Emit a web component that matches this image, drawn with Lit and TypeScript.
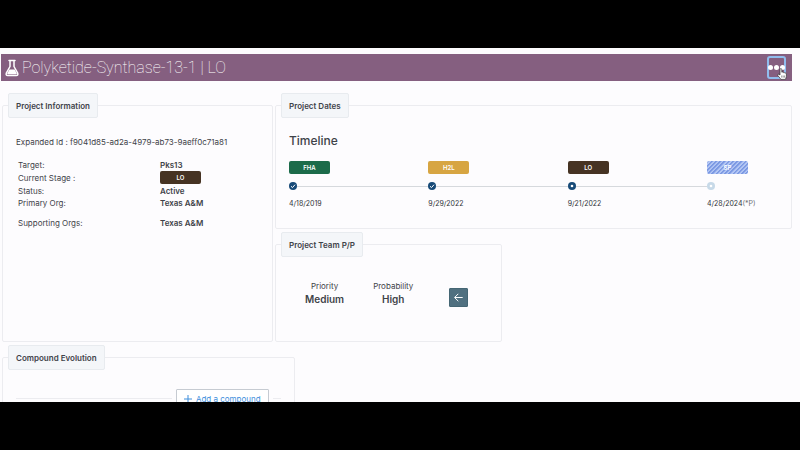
import { LitElement, html, css } from "lit";
import { customElement } from "lit/decorators.js";
import { classMap } from "lit/directives/class-map.js";

interface Stage {
  name: string;
  tone: string;
  date: string;
  note?: string;
  state: "done" | "current" | "planned";
}

const STAGES: Stage[] = [
  { name: "FHA", tone: "fha", date: "4/18/2019", state: "done" },
  { name: "H2L", tone: "h2l", date: "9/29/2022", state: "done" },
  { name: "LO", tone: "lo", date: "9/21/2022", state: "current" },
  { name: "SP", tone: "sp", date: "4/28/2024", note: "(*P)", state: "planned" },
];

const tagStyles = css`
  .tag {
    display: flex;
    align-items: center;
    justify-content: center;
    box-sizing: border-box;
    width: 41px;
    height: 13px;
    border-radius: 2px;
    color: #fff;
    font-size: 6px;
    font-weight: 600;
  }
  .fha { background: #1c6b4a; }
  .h2l { background: #d7a542; }
  .lo { background: #463323; }
  .sp {
    color: #fff;
    background: repeating-linear-gradient(135deg, #7c99e3 0 1px, #b3c6f4 2px 3px);
  }
`;

@customElement("project-timeline")
export class ProjectTimeline extends LitElement {
  static styles = [
    tagStyles,
    css`
      :host { display: block; }
      .steps {
        display: flex;
        margin: 0;
        padding: 0;
        list-style: none;
      }
      .step { flex: 1; }
      .step:last-child { flex: none; width: 71px; }
      .rail {
        display: flex;
        align-items: center;
        height: 8px;
        margin: 8px 0;
      }
      .marker { flex: none; width: 8px; height: 8px; color: #174a78; }
      .planned .marker { color: #c7d9e8; }
      .line { flex: 1; height: 1px; background: #d6d9dd; }
      .date { font-size: 7px; line-height: 12px; color: #2f3338; white-space: nowrap; }
      .note { color: #6b7076; }
    `,
  ];

  render() {
    return html`<ol class="steps">
      ${STAGES.map(
        (s, i) => html`<li class=${classMap({ step: true, [s.state]: true })}>
          <span class="tag ${s.tone}">${s.name}</span>
          <div class="rail">
            <svg class="marker" viewBox="0 0 16 16" aria-hidden="true">
              <circle cx="8" cy="8" r="8" fill="currentColor" />
              ${s.state === "done"
                ? html`<svg viewBox="0 0 16 16"><path d="M4 8.500 7 11.200 12 5.400" fill="none" stroke="#fff" stroke-width="2" /></svg>`
                : html`<svg viewBox="0 0 16 16"><circle cx="8" cy="8" r="2.600" fill="#fff" /></svg>`}
            </svg>
            ${i < STAGES.length - 1 ? html`<span class="line"></span>` : ""}
          </div>
          <div class="date">${s.date}<span class="note">${s.note ?? ""}</span></div>
        </li>`
      )}
    </ol>`;
  }
}

@customElement("app-root")
export class AppRoot extends LitElement {
  static styles = [
    tagStyles,
    css`
      :host {
        display: grid;
        grid-template-rows: 48px minmax(0, 1fr) 48px;
        height: 100vh;
        background: #000;
        color: #3f4349;
        font-family: Inter, "Liberation Sans", sans-serif;
        font-size: 8px;
      }
      .page {
        grid-row: 2;
        overflow: hidden;
        padding: 6px 8px 0 1px;
        background: #fdfcfe;
      }
      .bar {
        display: flex;
        align-items: center;
        gap: 3px;
        height: 27px;
        padding: 0 6px 0 4px;
        background: #855f80;
        color: #fff;
      }
      .flask { flex: none; width: 14px; height: 18px; }
      h1 {
        flex: 1;
        margin: 0;
        font-family: Roboto, "Liberation Sans", sans-serif;
        font-size: 16px;
        line-height: 20px;
        font-weight: 100;
        white-space: nowrap;
      }
      .more {
        position: relative;
        display: flex;
        align-items: center;
        justify-content: center;
        box-sizing: border-box;
        width: 19px;
        height: 23px;
        padding: 0;
        border: 2px solid #90bdee;
        border-radius: 3px;
        background: transparent;
        color: #fff;
      }
      .dots { flex: none; width: 17px; height: 5px; }
      .cursor { position: absolute; left: 8px; top: 10px; width: 10px; height: 12px; }
      .grid {
        display: grid;
        grid-template-columns: 271fr 517fr;
        gap: 4px 2px;
        padding: 12px 0 0 1px;
      }
      .right { display: grid; gap: 3px; }
      fieldset {
        box-sizing: border-box;
        min-width: 0;
        margin: 0;
        padding: 0 13px;
        border: 1px solid #ececf0;
        border-radius: 2px;
      }
      legend {
        box-sizing: border-box;
        height: 25px;
        margin-left: -8px;
        padding: 0 7px;
        border: 1px solid #e8ebef;
        border-radius: 2px;
        background: #f4f6f9;
        font-size: 8px;
        line-height: 24px;
        font-weight: 600;
      }
      .id { margin: 18px 0 11px; line-height: 12px; white-space: nowrap; }
      .facts { border-collapse: collapse; margin-left: 2px; line-height: 12px; }
      .facts th { width: 142px; padding: 0; text-align: left; font-weight: 400; }
      .facts td { padding: 0; font-weight: 600; }
      .facts .stage > * { padding-bottom: 1px; }
      .facts .tall > * { padding-top: 8px; }
      .dates { height: 136px; }
      h2 { margin: 14px 0 11px; font-size: 12px; line-height: 18px; font-weight: 500; }
      .team { width: 44%; height: 110px; }
      .scores {
        display: flex;
        align-items: center;
        padding: 23px 20px 0 16px;
      }
      dl {
        display: flex;
        flex: 1;
        gap: 29px;
        margin: 0;
        text-align: center;
      }
      dt { line-height: 12px; }
      dd { margin: 0; font-size: 10px; line-height: 15px; font-weight: 600; }
      .back {
        display: flex;
        align-items: center;
        justify-content: center;
        align-self: flex-end;
        width: 19px;
        height: 19px;
        padding: 0;
        border: 1px solid #456674;
        border-radius: 1px;
        background: #507080;
        color: #fff;
      }
      .back svg { flex: none; width: 9px; height: 9px; }
      .compounds { width: 37%; margin: 3px 0 0 1px; }
      .divider { display: flex; align-items: center; gap: 4px; padding-top: 19px; }
      .rule { flex: 1; height: 1px; background: #ececf0; }
      .rule.end { flex: none; width: 8px; }
      .add {
        display: flex;
        align-items: center;
        gap: 4px;
        height: 19px;
        padding: 0 7px;
        border: 1px solid #c6cbd2;
        border-radius: 1px;
        background: #fff;
        color: #3f8fdc;
        font: 400 8px/12px Inter, "Liberation Sans", sans-serif;
        white-space: nowrap;
      }
      .add svg { flex: none; width: 8px; height: 8px; }
    `,
  ];

  render() {
    return html`<main class="page">
      <header class="bar">
        <svg class="flask" viewBox="0 0 14 18" aria-hidden="true">
          <path d="M4 1.500H10M5 2V7.500L1.300 14.200Q.6 16.500 2.700 16.500H11.300Q13.400 16.500 12.700 14.200L9 7.500V2" fill="none" stroke="#fff" stroke-width="1.500" stroke-linecap="round" stroke-linejoin="round" />
          <path d="M4.400 10.500H9.600L11.700 14.300Q12 15.300 11 15.300H3Q2 15.300 2.300 14.300Z" fill="#fff" />
        </svg>
        <h1>Polyketide-Synthase-13-1 | LO</h1>
        <button class="more" aria-label="More actions">
          <svg class="dots" viewBox="0 0 17 5"><g fill="#fff"><circle cx="2.500" cy="2.500" r="2.500" /><circle cx="8.500" cy="2.500" r="2.500" /><circle cx="14.500" cy="2.500" r="2.500" /></g></svg>
          <svg class="cursor" viewBox="0 0 10 12"><path d="M3 7V1.600Q3 .6 3.900.6T4.800 1.600V4.200Q5.700 3.600 6.300 4.500Q7.200 4 7.800 4.900Q9.400 4.700 9.400 6V8.500L8.500 11.400H4L.8 7.500Q.5 6.200 1.700 6.200Z" fill="#fff" stroke="#333" stroke-width=".7" stroke-linejoin="round" /><path d="M4.700 7.500V9.600M6.200 7.500V9.600M7.600 7.500V9.600" stroke="#555" stroke-width=".6" /></svg>
        </button>
      </header>

      <div class="grid">
        <fieldset>
          <legend>Project Information</legend>
          <p class="id">Expanded Id : f9041d85-ad2a-4979-ab73-9aeff0c71a81</p>
          <table class="facts">
            <tr><th scope="row">Target:</th><td>Pks13</td></tr>
            <tr class="stage"><th scope="row">Current Stage :</th><td><span class="tag lo">LO</span></td></tr>
            <tr><th scope="row">Status:</th><td>Active</td></tr>
            <tr><th scope="row">Primary Org:</th><td>Texas A&amp;M</td></tr>
            <tr class="tall"><th scope="row">Supporting Orgs:</th><td>Texas A&amp;M</td></tr>
          </table>
        </fieldset>

        <div class="right">
          <fieldset class="dates">
            <legend>Project Dates</legend>
            <h2>Timeline</h2>
            <project-timeline></project-timeline>
          </fieldset>
          <fieldset class="team">
            <legend>Project Team P/P</legend>
            <div class="scores">
              <dl>
                <div><dt>Priority</dt><dd>Medium</dd></div>
                <div><dt>Probability</dt><dd>High</dd></div>
              </dl>
              <button class="back" aria-label="Back">
                <svg viewBox="0 0 9 9"><path d="M8.700 4.500H.8M4.300.8.600 4.500 4.300 8.200" fill="none" stroke="#fff" stroke-width="1" /></svg>
              </button>
            </div>
          </fieldset>
        </div>
      </div>

      <fieldset class="compounds">
        <legend>Compound Evolution</legend>
        <div class="divider">
          <span class="rule"></span>
          <button class="add">
            <svg viewBox="0 0 8 8" aria-hidden="true"><path d="M4 0V8M0 4H8" stroke="currentColor" stroke-width="1" /></svg>
            Add a compound
          </button>
          <span class="rule end"></span>
        </div>
      </fieldset>
    </main>`;
  }
}
